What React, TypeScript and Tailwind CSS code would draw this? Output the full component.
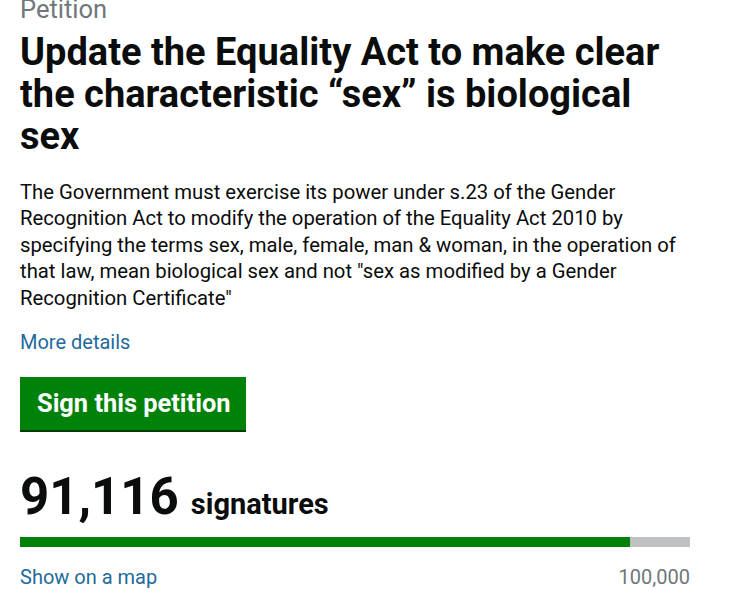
import React from "react";

export default function App() {
  const count = 91116;
  const target = 100000;
  const pct = (count / target) * 100;
  return (
    <div className="w-[741px] h-[600px] bg-white overflow-hidden" style={{ fontFamily: "Roboto, 'Noto Sans', sans-serif" }}>
      <div className="w-[670px] ml-[20px]">
        <div className="text-[25.5px] leading-[25.5px] text-[#6f777b] -mt-[3px]">Petition</div>
        <h1 className="mt-[8px] text-[38px] leading-[42px] font-bold text-[#0b0c0c]">
          Update the Equality Act to make clear the characteristic “sex” is biological sex
        </h1>
        <p className="mt-[22px] text-[20.3px] leading-[26.5px] text-[#0b0c0c]">
          The Government must exercise its power under s.23 of the Gender Recognition Act to modify the operation of the Equality Act 2010 by specifying the terms sex, male, female, man &amp; woman, in the operation of that law, mean biological sex and not "sex as modified by a Gender Recognition Certificate"
        </p>
        <div className="mt-[18px] text-[20px] leading-[26.5px] text-[#1f6a9c]">More details</div>
        <div className="mt-[21px] flex">
          <div className="bg-[#00820a] text-white font-bold text-[25.4px] leading-[28px] pt-[12px] pb-[13px] pl-[17px] pr-[16px] shadow-[0_2px_0_#003a05]">
            Sign this petition
          </div>
        </div>
        <div className="mt-[39px] flex items-baseline text-[#0b0c0c] font-bold">
          <span className="text-[51px] leading-[56px]">91,116</span>
          <span className="ml-[12px] text-[29px] leading-[32px]">signatures</span>
        </div>
        <div className="mt-[12px] h-[10px] bg-[#bfc1c3]">
          <div className="h-full bg-[#00820a]" style={{ width: `${pct}%` }} />
        </div>
        <div className="mt-[18px] flex justify-between text-[20px] leading-[24px]">
          <span className="text-[#1f6a9c]">Show on a map</span>
          <span className="text-[#6f777b]">100,000</span>
        </div>
      </div>
    </div>
  );
}
